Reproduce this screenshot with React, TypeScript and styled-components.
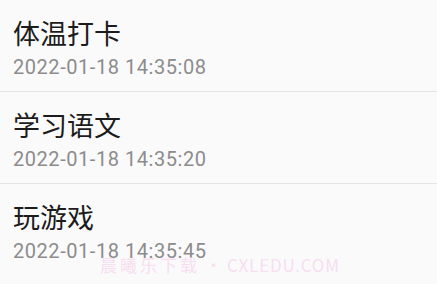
import React from "react";
import styled, { createGlobalStyle } from "styled-components";

const Global = createGlobalStyle`
  html, body { margin: 0; padding: 0; background: #fbfafb; }
  body { width: 437px; height: 284px; overflow: hidden; }
`;

const Page = styled.div`
  position: relative;
  width: 437px;
  height: 284px;
  background: #fbfafb;
  overflow: hidden;
`;

const List = styled.ul`
  list-style: none;
  margin: 0;
  padding: 0;
`;

const Row = styled.li`
  display: flex;
  flex-direction: column;
  height: 92px;
  box-sizing: border-box;
  padding: 16px 0 0 13px;
  border-bottom: 1px solid #e3e3e3;
  &:last-child { border-bottom: none; }
`;

const Title = styled.div`
  font-family: "Noto Sans CJK SC", sans-serif;
  font-size: 27px;
  line-height: 34px;
  color: #1c1c1c;
`;

const Time = styled.div`
  margin-top: 8px;
  font-family: Roboto, "Noto Sans", sans-serif;
  font-size: 20px;
  line-height: 18px;
  letter-spacing: 0.55px;
  color: #8c8c8c;
`;

const Watermark = styled.div`
  position: absolute;
  left: 100px;
  top: 258px;
  display: flex;
  align-items: center;
  gap: 5px;
  font-family: "Noto Sans CJK SC", Roboto, sans-serif;
  font-size: 17px;
  line-height: 13px;
  color: #f7def0;
  white-space: nowrap;
`;

const WmPart = styled.span<{ $spacing: number }>`
  letter-spacing: ${(p) => p.$spacing}px;
`;

const items = [
  { title: "体温打卡", time: "2022-01-18 14:35:08" },
  { title: "学习语文", time: "2022-01-18 14:35:20" },
  { title: "玩游戏", time: "2022-01-18 14:35:45" },
];

export default function App() {
  return (
    <Page>
      <Global />
      <List>
        {items.map((it) => (
          <Row key={it.time}>
            <Title>{it.title}</Title>
            <Time>{it.time}</Time>
          </Row>
        ))}
      </List>
      <Watermark>
        <WmPart $spacing={3}>晨曦乐下载</WmPart>
        <WmPart $spacing={0}>•</WmPart>
        <WmPart $spacing={0.8}>CXLEDU.COM</WmPart>
      </Watermark>
    </Page>
  );
}
